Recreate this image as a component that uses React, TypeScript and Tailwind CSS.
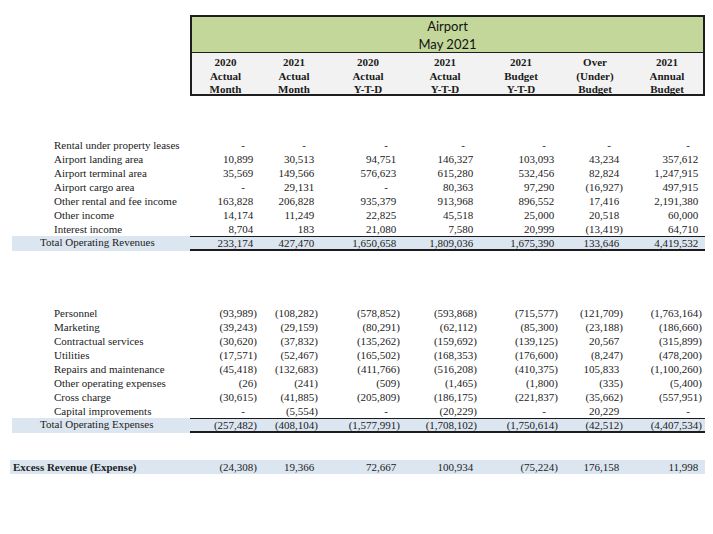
const GRID = "grid grid-cols-[190px_68px_70px_78px_76px_76px_72px_75px]";
const PAD = ["pr-[1px]", "pr-[10px]", "pr-[6px]", "pr-[5px]", "pr-0", "pr-[7px]", "pr-[3px]"];

const headers = [
  ["2020", "Actual", "Month"],
  ["2021", "Actual", "Month"],
  ["2020", "Actual", "Y-T-D"],
  ["2021", "Actual", "Y-T-D"],
  ["2021", "Budget", "Y-T-D"],
  ["Over", "(Under)", "Budget"],
  ["2021", "Annual", "Budget"],
];

const revenues: [string, string[]][] = [
  ["Rental under property leases", ["-", "-", "-", "-", "-", "-", "-"]],
  ["Airport landing area", ["10,899", "30,513", "94,751", "146,327", "103,093", "43,234", "357,612"]],
  ["Airport terminal area", ["35,569", "149,566", "576,623", "615,280", "532,456", "82,824", "1,247,915"]],
  ["Airport cargo area", ["-", "29,131", "-", "80,363", "97,290", "(16,927)", "497,915"]],
  ["Other rental and fee income", ["163,828", "206,828", "935,379", "913,968", "896,552", "17,416", "2,191,380"]],
  ["Other income", ["14,174", "11,249", "22,825", "45,518", "25,000", "20,518", "60,000"]],
  ["Interest income", ["8,704", "183", "21,080", "7,580", "20,999", "(13,419)", "64,710"]],
];
const revTotal = ["233,174", "427,470", "1,650,658", "1,809,036", "1,675,390", "133,646", "4,419,532"];

const expenses: [string, string[]][] = [
  ["Personnel", ["(93,989)", "(108,282)", "(578,852)", "(593,868)", "(715,577)", "(121,709)", "(1,763,164)"]],
  ["Marketing", ["(39,243)", "(29,159)", "(80,291)", "(62,112)", "(85,300)", "(23,188)", "(186,660)"]],
  ["Contractual services", ["(30,620)", "(37,832)", "(135,262)", "(159,692)", "(139,125)", "20,567", "(315,899)"]],
  ["Utilities", ["(17,571)", "(52,467)", "(165,502)", "(168,353)", "(176,600)", "(8,247)", "(478,200)"]],
  ["Repairs and maintenance", ["(45,418)", "(132,683)", "(411,766)", "(516,208)", "(410,375)", "105,833", "(1,100,260)"]],
  ["Other operating expenses", ["(26)", "(241)", "(509)", "(1,465)", "(1,800)", "(335)", "(5,400)"]],
  ["Cross charge", ["(30,615)", "(41,885)", "(205,809)", "(186,175)", "(221,837)", "(35,662)", "(557,951)"]],
  ["Capital improvements", ["-", "(5,554)", "-", "(20,229)", "-", "20,229", "-"]],
];
const expTotal = ["(257,482)", "(408,104)", "(1,577,991)", "(1,708,102)", "(1,750,614)", "(42,512)", "(4,407,534)"];
const excess = ["(24,308)", "19,366", "72,667", "100,934", "(75,224)", "176,158", "11,998"];

function Num({ v, i }: { v: string; i: number }) {
  if (v === "-") {
    return (
      <div className={`text-right ${PAD[i]}`}>
        <span className="pr-[12px]">-</span>
      </div>
    );
  }
  const neg = v.startsWith("(");
  return (
    <div className={`text-right ${PAD[i]}`}>
      {v}
      {!neg && <span className="invisible">)</span>}
    </div>
  );
}

function Row({ label, values }: { label: string; values: string[] }) {
  return (
    <div className={`${GRID} h-[14px] leading-[14px]`}>
      <div className="pl-[54px] whitespace-nowrap">{label}</div>
      {values.map((v, i) => (
        <Num key={i} v={v} i={i} />
      ))}
    </div>
  );
}

function TotalRow({ label, values }: { label: string; values: string[] }) {
  return (
    <div className={`${GRID} h-[14px] leading-[12px]`}>
      <div className="ml-[12px] bg-[#dce6f1] pl-[28px] whitespace-nowrap">{label}</div>
      {values.map((v, i) => (
        <div key={i} className="border-t border-b-2 border-[#1c1c1c] bg-[#dce6f1]">
          <Num v={v} i={i} />
        </div>
      ))}
    </div>
  );
}

export default function App() {
  return (
    <div className="h-[534px] w-[713px] bg-white font-['Liberation_Serif',serif] text-[11px] text-[#222]">
      <div className="flex pt-[15px]">
        <div className="w-[190px]" />
        <div className="w-[515px] border-2 border-[#1e1e1e]">
          <div className="flex h-[36px] flex-col items-center justify-center border-b border-[#1e1e1e] bg-[#c4d79b] font-['Lato',sans-serif] text-[13px] leading-[18px] text-[#111]">
            <div>Airport</div>
            <div>May 2021</div>
          </div>
          <div className="grid h-[41px] grid-cols-[67px_70px_78px_76px_76px_72px_72px] items-center bg-[#f2f2f2] pt-[3px] text-[11px] font-bold leading-[13.5px] text-[#1a1a1a]">
            {headers.map((h, i) => (
              <div key={i} className="text-center">
                {h.map((line) => (
                  <div key={line}>{line}</div>
                ))}
              </div>
            ))}
          </div>
        </div>
      </div>

      <div className="mt-[42px]">
        {revenues.map(([label, values]) => (
          <Row key={label} label={label} values={values} />
        ))}
        <TotalRow label="Total Operating Revenues" values={revTotal} />
      </div>

      <div className="mt-[56px]">
        {expenses.map(([label, values]) => (
          <Row key={label} label={label} values={values} />
        ))}
        <TotalRow label="Total Operating Expenses" values={expTotal} />
      </div>

      <div className={`${GRID} mt-[28px] h-[14px] leading-[14px]`}>
        <div className="ml-[10px] bg-[#dce6f1] pl-[3px] font-bold whitespace-nowrap">Excess Revenue (Expense)</div>
        {excess.map((v, i) => (
          <div key={i} className="bg-[#dce6f1]">
            <Num v={v} i={i} />
          </div>
        ))}
      </div>
    </div>
  );
}
